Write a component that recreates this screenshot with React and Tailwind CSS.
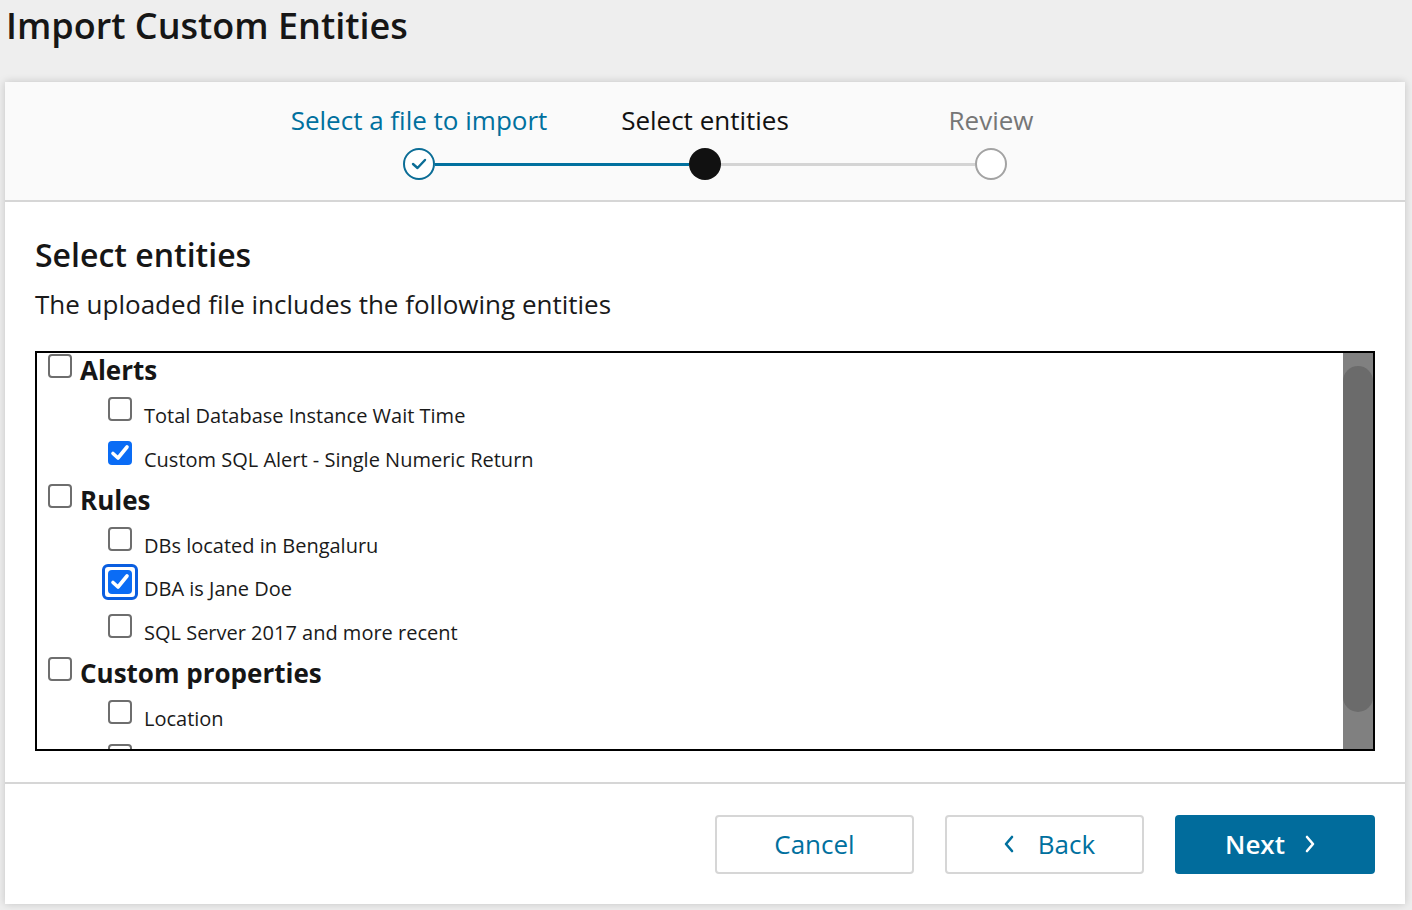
import React from "react";

const font = { fontFamily: '"Open Sans", "Noto Sans", sans-serif' };

function Box({ checked, focus }) {
  if (checked) {
    const inner = (
      <span className="flex h-6 w-6 items-center justify-center rounded-[4px] bg-[#0a6cf5]">
        <svg width="24" height="24" viewBox="0 0 24 24">
          <path d="M5 12.5 L10 17 L19 6" fill="none" stroke="#fff" strokeWidth="3.6" strokeLinecap="round" strokeLinejoin="round" />
        </svg>
      </span>
    );
    if (focus) {
      return (
        <span className="-m-[6px] flex h-[36px] w-[36px] shrink-0 items-center justify-center rounded-[6px] border-[3px] border-[#0a5ee0] bg-white">
          {inner}
        </span>
      );
    }
    return <span className="block shrink-0">{inner}</span>;
  }
  return <span className="block h-6 w-6 shrink-0 rounded-[4px] border-2 border-[#6e6e6e] bg-white" />;
}

function GroupRow({ label }) {
  return (
    <div className="flex h-[43.3px] items-start pl-[11px]">
      <span className="mt-[1px] flex h-6 w-6 items-center justify-center"><Box /></span>
      <span className="ml-[8px] text-[26px] font-bold leading-[34px] text-[#161616]">{label}</span>
    </div>
  );
}

function ChildRow({ label, checked, focus }) {
  return (
    <div className="flex h-[43.3px] items-start pl-[71px]">
      <span className="mt-[1px] flex h-6 w-6 items-center justify-center"><Box checked={checked} focus={focus} /></span>
      <span className="ml-[12px] text-[20px] leading-[40px] text-[#1a1a1a]">{label}</span>
    </div>
  );
}

export default function App() {
  return (
    <div className="min-h-[910px] w-full bg-[#eeeeee]" style={font}>
      <h1 className="pl-[6px] pt-[2px] text-[36px] font-semibold leading-[48px] text-[#161616]">Import Custom Entities</h1>
      <div className="ml-[5px] mt-[32px] w-[1400px] bg-white shadow-[0_0_8px_rgba(0,0,0,0.18)]">
        {/* header / stepper */}
        <div className="h-[120px] border-b-2 border-[#d6d6d6] bg-[#fafafa] pt-[20px]">
          <div className="mx-auto grid w-[858px] grid-cols-3 text-center text-[26px] leading-[36px]">
            <div className="text-[#00709e]">Select a file to import</div>
            <div className="text-[#111]">Select entities</div>
            <div className="text-[#767676]">Review</div>
          </div>
          <div className="mx-auto mt-[10px] flex w-[604px] items-center">
            <span className="flex h-[32px] w-[32px] shrink-0 items-center justify-center rounded-full border-2 border-[#0b6d96] bg-white">
              <svg width="20" height="20" viewBox="0 0 20 20">
                <path d="M4 10 L8.5 14 L16 6" fill="none" stroke="#0b6d96" strokeWidth="2.4" strokeLinecap="round" strokeLinejoin="round" />
              </svg>
            </span>
            <span className="h-[3px] flex-1 bg-[#00709e]" />
            <span className="h-[32px] w-[32px] shrink-0 rounded-full bg-[#111]" />
            <span className="h-[3px] flex-1 bg-[#d4d4d4]" />
            <span className="h-[32px] w-[32px] shrink-0 rounded-full border-2 border-[#a3a3a3] bg-white" />
          </div>
        </div>

        {/* body */}
        <div className="border-b-2 border-[#d6d6d6] px-[30px] pb-[31px] pt-[32px]">
          <h2 className="text-[32px] font-semibold leading-[42px] text-[#161616]">Select entities</h2>
          <p className="mt-[10px] text-[26px] leading-[36px] text-[#1a1a1a]">The uploaded file includes the following entities</p>
          <div className="mt-[29px] flex h-[400px] overflow-hidden border-2 border-black">
            <div className="flex-1 overflow-hidden">
              <GroupRow label="Alerts" />
              <ChildRow label="Total Database Instance Wait Time" />
              <ChildRow label="Custom SQL Alert - Single Numeric Return" checked />
              <GroupRow label="Rules" />
              <ChildRow label="DBs located in Bengaluru" />
              <ChildRow label="DBA is Jane Doe" checked focus />
              <ChildRow label="SQL Server 2017 and more recent" />
              <GroupRow label="Custom properties" />
              <ChildRow label="Location" />
              <ChildRow label="" />
            </div>
            <div className="w-[30px] shrink-0 bg-[#808080] pt-[13px]">
              <div className="h-[346px] w-full rounded-full bg-[#6b6b6b]" />
            </div>
          </div>
        </div>

        {/* footer */}
        <div className="flex h-[120px] items-center justify-end gap-[31px] pr-[30px]">
          <button className="h-[59px] w-[199px] rounded-[4px] border-2 border-[#d6d6d6] bg-white text-[26px] text-[#00709e]">Cancel</button>
          <button className="flex h-[59px] w-[199px] items-center justify-center gap-[22px] rounded-[4px] border-2 border-[#d6d6d6] bg-white pl-[8px] text-[26px] text-[#00709e]">
            <svg width="14" height="20" viewBox="0 0 14 20">
              <path d="M10 3 L4 10 L10 17" fill="none" stroke="#00709e" strokeWidth="2.6" strokeLinecap="round" strokeLinejoin="round" />
            </svg>
            <span>Back</span>
          </button>
          <button className="flex h-[59px] w-[200px] items-center justify-center gap-[18px] rounded-[4px] bg-[#016c9c] pr-[8px] text-[26px] font-semibold text-white">
            <span>Next</span>
            <svg width="14" height="20" viewBox="0 0 14 20">
              <path d="M4 3 L10 10 L4 17" fill="none" stroke="#fff" strokeWidth="2.6" strokeLinecap="round" strokeLinejoin="round" />
            </svg>
          </button>
        </div>
      </div>
    </div>
  );
}
